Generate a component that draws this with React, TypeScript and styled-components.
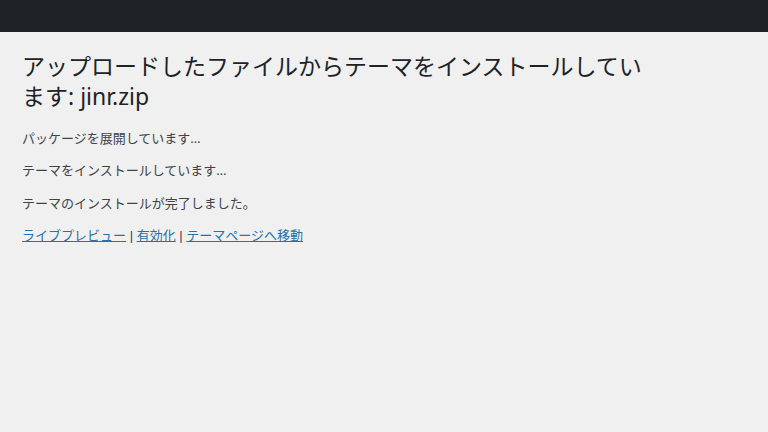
import React from "react";
import styled, { createGlobalStyle } from "styled-components";

const Global = createGlobalStyle`
  html, body {
    margin: 0;
    padding: 0;
    background: #f0f0f1;
  }
  body {
    font-family: "Noto Sans", "Noto Sans CJK JP", sans-serif;
    color: #3c434a;
    font-size: 13px;
    line-height: 1.5;
  }
`;

const Page = styled.div`
  min-height: 432px;
  background: #f0f0f1;
  display: flex;
  flex-direction: column;
`;

const AdminBar = styled.div`
  height: 32px;
  background: #1d2327;
  flex-shrink: 0;
`;

const Wrap = styled.div`
  padding: 11px 20px 0 22px;
`;

const Title = styled.h1`
  margin: 0;
  padding: 9px 0 4px;
  max-width: 632px;
  font-size: 23px;
  font-weight: 400;
  line-height: 1.3;
  color: #1d2327;
`;

const Message = styled.p`
  margin: 13px 0;
  font-size: 13px;
  line-height: 1.5;
  color: #3c434a;
`;

const Link = styled.a`
  color: #2271b1;
  text-decoration: underline;
`;

const Separator = styled.span`
  font-family: "Liberation Sans", sans-serif;
  color: #3c434a;
`;

export default function App() {
  return (
    <>
      <Global />
      <Page>
        <AdminBar />
        <Wrap>
          <Title>アップロードしたファイルからテーマをインストールしています: jinr.zip</Title>
          <Message>パッケージを展開しています…</Message>
          <Message>テーマをインストールしています…</Message>
          <Message>テーマのインストールが完了しました。</Message>
          <Message>
            <Link href="#">ライブプレビュー</Link>
            <Separator> | </Separator>
            <Link href="#">有効化</Link>
            <Separator> | </Separator>
            <Link href="#">テーマページへ移動</Link>
          </Message>
        </Wrap>
      </Page>
    </>
  );
}
